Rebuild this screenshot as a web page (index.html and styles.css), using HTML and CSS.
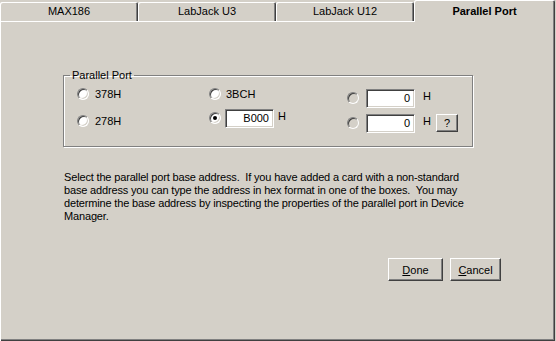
FILE: index.html
```html
<!DOCTYPE html>
<html lang="en">

<head>
    <meta charset="UTF-8">
    <title>Parallel Port</title>
    <link rel="stylesheet" href="styles.css">
</head>

<body>
    <div class="tabs">
        <div class="tab">MAX186</div>
        <div class="tab">LabJack U3</div>
        <div class="tab">LabJack U12</div>
        <div class="tab tab-active">Parallel Port</div>
    </div>

    <div class="panel">
        <fieldset class="group">
            <legend>Parallel Port</legend>
            <div class="group-body">
                <div class="col col-1">
                    <label class="row"><span class="radio"></span>378H</label>
                    <label class="row"><span class="radio"></span>278H</label>
                </div>
                <div class="col col-2">
                    <label class="row"><span class="radio"></span>3BCH</label>
                    <label class="row"><span class="radio checked"></span><span class="field">B000</span><span class="unit">H</span></label>
                </div>
                <div class="col col-3">
                    <label class="row"><span class="radio disabled"></span><span class="field">0</span><span class="unit">H</span></label>
                    <label class="row"><span class="radio disabled"></span><span class="field">0</span><span class="unit">H</span><button class="btn btn-help">?</button></label>
                </div>
            </div>
        </fieldset>

        <p class="hint">
            Select the parallel port base address.&nbsp; If you have added a card with a non-standard<br>
            base address you can type the address in hex format in one of the boxes.&nbsp; You may<br>
            determine the base address by inspecting the properties of the parallel port in Device<br>
            Manager.
        </p>

        <div class="actions">
            <button class="btn btn-done"><u>D</u>one</button>
            <button class="btn btn-cancel"><u>C</u>ancel</button>
        </div>
    </div>
</body>

</html>
```

FILE: styles.css
```css
* {
    margin: 0;
    padding: 0;
    box-sizing: border-box;
}

body {
    width: 556px;
    height: 341px;
    overflow: hidden;
    background-color: #d4d0c8;
    font-family: 'Liberation Sans', Arial, sans-serif;
    font-size: 11px;
    line-height: 13px;
    color: #000;
}

/* tab strip */
.tabs {
    display: flex;
    align-items: flex-end;
    height: 21px;
}

.tab {
    width: 138px;
    height: 19px;
    padding-top: 3px;
    text-align: center;
    border-radius: 2px 2px 0 0;
    box-shadow: inset 1px 1px 0 #fff, inset -1px 0 0 #404040, inset -2px 0 0 #808080;
}

.tab-active {
    position: relative;
    z-index: 1;
    width: 141px;
    height: 22px;
    margin-bottom: -1px;
    padding-top: 5px;
    font-weight: bold;
    background-color: #d4d0c8;
}

.panel {
    width: 555px;
    height: 320px;
    padding-top: 48px;
    box-shadow: inset 1px 1px 0 #fff, inset -1px -1px 0 #404040, inset -2px -2px 0 #808080;
}

/* group box */
.group {
    width: 410px;
    margin-left: 63px;
    padding: 0 0 13px 0;
    border: 1px solid #808080;
    box-shadow: 1px 1px 0 #fff, inset 1px 1px 0 #fff;
}

.group legend {
    margin-left: 6px;
    padding: 0 2px;
}

.group-body {
    display: flex;
}

.col {
    display: flex;
    flex-direction: column;
}

.col-1 {
    width: 145px;
    padding-left: 13px;
    padding-top: 2px;
    gap: 7px;
}

.col-2 {
    width: 138px;
    padding-top: 2px;
    gap: 4px;
}

.col-3 {
    padding-top: 6px;
    gap: 5px;
}

.row {
    display: flex;
    align-items: center;
    height: 20px;
}

/* radio button */
.radio {
    position: relative;
    width: 12px;
    height: 12px;
    flex: none;
    border-radius: 50%;
    background-color: #fff;
    border: 1px solid;
    border-color: #808080 #fff #fff #808080;
    box-shadow: inset 1px 1px 0 #404040, inset -1px -1px 0 #d4d0c8;
    margin-right: 6px;
}

.col-2 .radio {
    margin-right: 5px;
}

.col-2 .checked {
    margin-right: 4px;
}

.radio.checked::after {
    content: "";
    position: absolute;
    top: 3px;
    left: 3px;
    width: 4px;
    height: 4px;
    border-radius: 50%;
    background-color: #000;
}

.radio.disabled {
    background-color: #d4d0c8;
    margin-right: 7px;
}

/* edit box */
.field {
    width: 49px;
    height: 19px;
    padding: 2px 4px 0 0;
    text-align: right;
    background-color: #fff;
    border: 1px solid;
    border-color: #808080 #fff #fff #808080;
    box-shadow: inset 1px 1px 0 #404040, inset -1px -1px 0 #d4d0c8;
}

.unit {
    margin-left: 4px;
    margin-top: -4px;
}

.col-3 .unit {
    margin-left: 8px;
}

/* buttons */
.btn {
    font-family: inherit;
    font-size: 11px;
    color: #000;
    background-color: #d4d0c8;
    border: 1px solid;
    border-color: #fff #404040 #404040 #fff;
    box-shadow: inset -1px -1px 0 #808080;
    cursor: pointer;
}

.btn-help {
    width: 22px;
    height: 18px;
    margin-left: 5px;
}

.hint {
    margin: 24px 0 0 64px;
    white-space: nowrap;
    letter-spacing: -0.16px;
}

.actions {
    display: flex;
    gap: 7px;
    margin: 35px 0 0 388px;
}

.btn-done {
    width: 55px;
    height: 23px;
}

.btn-cancel {
    width: 51px;
    height: 23px;
}
```
